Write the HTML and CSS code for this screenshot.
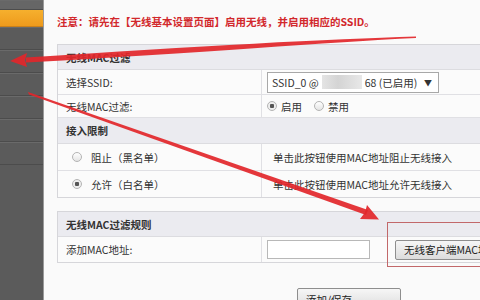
FILE: index.html
```html
<!DOCTYPE html>
<html lang="zh">
<head>
<meta charset="utf-8">
<link rel="stylesheet" href="styles.css">
</head>
<body>
<div class="page">
  <aside class="sidebar">
    <div class="nav nav-top"></div>
    <div class="nav nav-active"></div>
    <div class="nav"></div>
    <div class="nav"></div>
    <div class="nav"></div>
    <div class="nav"></div>
    <div class="nav"></div>
    <div class="nav"></div>
  </aside>
  <main class="main">
    <p class="notice">注意：请先在【无线基本设置页面】启用无线，并启用相应的SSID。</p>
    <div class="panel">
      <div class="head">无线MAC过滤</div>
      <div class="row r1">
        <div class="label">选择SSID:</div>
        <div class="value">
          <div class="select"><span>SSID_0 @</span><span class="blur"></span><span>68 (已启用)</span><span class="caret">▼</span></div>
        </div>
      </div>
      <div class="row r2">
        <div class="label">无线MAC过滤:</div>
        <div class="value">
          <span class="radio on"></span><span class="rtext">启用</span>
          <span class="radio"></span><span class="rtext">禁用</span>
        </div>
      </div>
      <div class="head h2">接入限制</div>
      <div class="row r3">
        <div class="label"><span class="radio"></span><span class="rtext">阻止（黑名单）</span></div>
        <div class="value desc">单击此按钮使用MAC地址阻止无线接入</div>
      </div>
      <div class="row r4 last">
        <div class="label"><span class="radio on"></span><span class="rtext">允许（白名单）</span></div>
        <div class="value desc">单击此按钮使用MAC地址允许无线接入</div>
      </div>
    </div>

    <div class="panel panel2">
      <div class="head">无线MAC过滤规则</div>
      <div class="row r5 last">
        <div class="label">添加MAC地址:</div>
        <div class="value">
          <span class="input"></span>
          <span class="btn">无线客户端MAC地址</span>
        </div>
      </div>
    </div>

    <div class="actions"><span class="btn save">添加/保存</span></div>
  </main>

  <div class="hilite"></div>

  <svg class="marks" width="480" height="300" viewBox="0 0 480 300">
    <g fill="#e2262a" fill-opacity="0.92">
      <path d="M416 36.5 C330 39, 200 46, 26 57.5 L26 62.5 C200 53, 330 42, 416 38 Z"/>
      <path d="M10 61 L27 53 L25 60 L27 67 Z"/>
      <path d="M28 92 L29 94.5 L366 215 L368 210 Z"/>
      <path d="M379 219.5 L360 219 L365 212.5 L367 205 Z"/>
    </g>
  </svg>
</div>
</body>
</html>
```

FILE: styles.css
```css
* { box-sizing: border-box; }
html, body { margin: 0; padding: 0; }
body {
  width: 480px;
  height: 300px;
  overflow: hidden;
  font-family: "Noto Sans CJK SC", "Liberation Sans", sans-serif;
  font-size: 10.5px;
  color: #333;
  background: #fafafa;
}
.page {
  position: relative;
  display: flex;
  width: 480px;
  height: 300px;
  overflow: hidden;
}
.sidebar {
  width: 44px;
  flex: none;
  background: #5b5b5b;
  border-right: 1px solid #9a9a9a;
  display: flex;
  flex-direction: column;
}
.nav {
  height: 23px;
  border-bottom: 1px solid #4c4c4c;
  box-shadow: inset 0 1px 0 #6a6a6a;
}
.nav-top { height: 10px; background: #666; }
.nav-active {
  height: 17px;
  background: linear-gradient(#f6b02e, #ee9a1c);
  border-bottom: 1px solid #c9801a;
  box-shadow: none;
}
.main {
  flex: none;
  width: 436px;
  padding: 15px 0 0 13px;
  background: #fafafa;
}
.notice {
  margin: 0;
  height: 14px;
  line-height: 14px;
  color: #d2282c;
  font-weight: bold;
  white-space: nowrap;
}
.panel {
  margin-top: 15px;
  width: 440px;
  border: 1px solid #d6d6da;
  background: #f8f8f8;
}
.panel2 { margin-top: 13px; }
.head {
  height: 25px;
  line-height: 25px;
  padding-left: 8px;
  background: #ebebf0;
  font-weight: bold;
  color: #333;
  border-bottom: 1px solid #dcdce0;
}
.h2 { height: 26px; line-height: 26px; }
.row {
  display: grid;
  grid-template-columns: 204px 1fr;
  border-bottom: 1px solid #e0e0e4;
  background: #fbfbfb;
}
.row.last { border-bottom: none; }
.r1 { height: 25px; }
.r2 { height: 23px; }
.r3 { height: 27px; }
.r4 { height: 26px; }
.r5 { height: 25px; }
.label {
  display: flex;
  align-items: center;
  padding-left: 8px;
  border-right: 1px solid #e0e0e4;
  white-space: nowrap;
}
.r3 .label, .r4 .label { padding-left: 14px; }
.value {
  display: flex;
  align-items: center;
  padding-left: 5px;
  white-space: nowrap;
}
.desc { padding-left: 11px; }
.select {
  display: flex;
  align-items: center;
  width: 172px;
  height: 21px;
  border: 1px solid #a8a8a8;
  background: #fff;
  padding-left: 4px;
  color: #333;
}
.blur {
  width: 40px;
  height: 14px;
  margin: 0 3px;
  background: linear-gradient(90deg, #e4e4e4, #d4d4d4 40%, #e8e8e8);
}
.caret { margin-left: auto; margin-right: 6px; font-size: 8px; }
.radio {
  width: 10px;
  height: 10px;
  border-radius: 50%;
  border: 1px solid #b4b4b4;
  background: linear-gradient(#fff, #e4e4e4);
  margin-right: 4px;
  flex: none;
}
.radio.on {
  background: radial-gradient(circle, #555 0 2px, #eee 2.5px);
}
.rtext { margin-right: 12px; }
.r3 .rtext, .r4 .rtext { margin-left: 5px; }
.input {
  width: 103px;
  height: 19px;
  border: 1px solid #b8b8b8;
  background: #fff;
}
.btn {
  display: inline-flex;
  align-items: center;
  height: 20px;
  padding: 0 8px;
  border: 1px solid #8e8e8e;
  border-radius: 2px;
  background: linear-gradient(#f6f6f6, #dcdcdc);
  color: #222;
}
.r5 .btn { margin-left: 25px; width: 110px; }
.actions { padding: 25px 0 0 240px; }
.save { width: 104px; height: 22px; }
.hilite {
  position: absolute;
  left: 387px;
  top: 222px;
  width: 120px;
  height: 45px;
  border: 1px solid #c2686a;
}
.marks {
  position: absolute;
  left: 0;
  top: 0;
  pointer-events: none;
}
```
